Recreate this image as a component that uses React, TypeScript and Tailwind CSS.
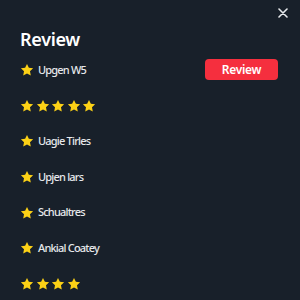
import React from "react";

const Star = ({ size = 14 }: { size?: number }) => (
  <svg width={size} height={size} viewBox="0 0 24 24" className="shrink-0">
    <path
      d="M12 1.5l3.2 6.7 7.3.9-5.4 5.1 1.4 7.3L12 18l-6.5 3.5 1.4-7.3-5.4-5.1 7.3-.9z"
      fill="#fcd116"
    />
  </svg>
);

const TextRow = ({ label, right }: { label: string; right?: React.ReactNode }) => (
  <div className="h-[35.7px] flex items-center justify-between">
    <div className="flex items-center gap-[4px]">
      <Star />
      <span className="text-[11px] font-medium text-[#e6e8eb] tracking-[-0.8px]">{label}</span>
    </div>
    {right}
  </div>
);

const StarRow = ({ n }: { n: number }) => (
  <div className="h-[35.7px] flex items-center gap-[1.5px]">
    {Array.from({ length: n }).map((_, i) => (
      <Star key={i} size={14} />
    ))}
  </div>
);

export default function App() {
  return (
    <div
      className="w-[300px] h-[300px] bg-[#18202a] relative overflow-hidden"
      style={{ fontFamily: '"Noto Sans", sans-serif' }}
    >
      <button className="absolute right-[12px] top-[8px] w-[10px] h-[10px] flex items-center justify-center">
        <svg width="10" height="10" viewBox="0 0 10 10">
          <path d="M1 1L9 9M9 1L1 9" stroke="#e8eaed" strokeWidth="1.6" strokeLinecap="round" />
        </svg>
      </button>
      <div className="pl-[20px] pr-[22px] pt-[27px]">
        <div className="h-[25px] text-[18px] leading-[24px] font-semibold text-white tracking-[-0.3px]">Review</div>
        <TextRow
          label="Upgen W5"
          right={
            <button className="w-[73px] h-[21px] rounded-[4px] bg-[#f52f3e] text-white text-[12px] font-semibold tracking-[-0.3px] flex items-center justify-center">
              Review
            </button>
          }
        />
        <StarRow n={5} />
        <TextRow label="Uagie Tirles" />
        <TextRow label="Upjen lars" />
        <TextRow label="Schualtres" />
        <TextRow label="Ankial Coatey" />
        <StarRow n={4} />
      </div>
    </div>
  );
}
